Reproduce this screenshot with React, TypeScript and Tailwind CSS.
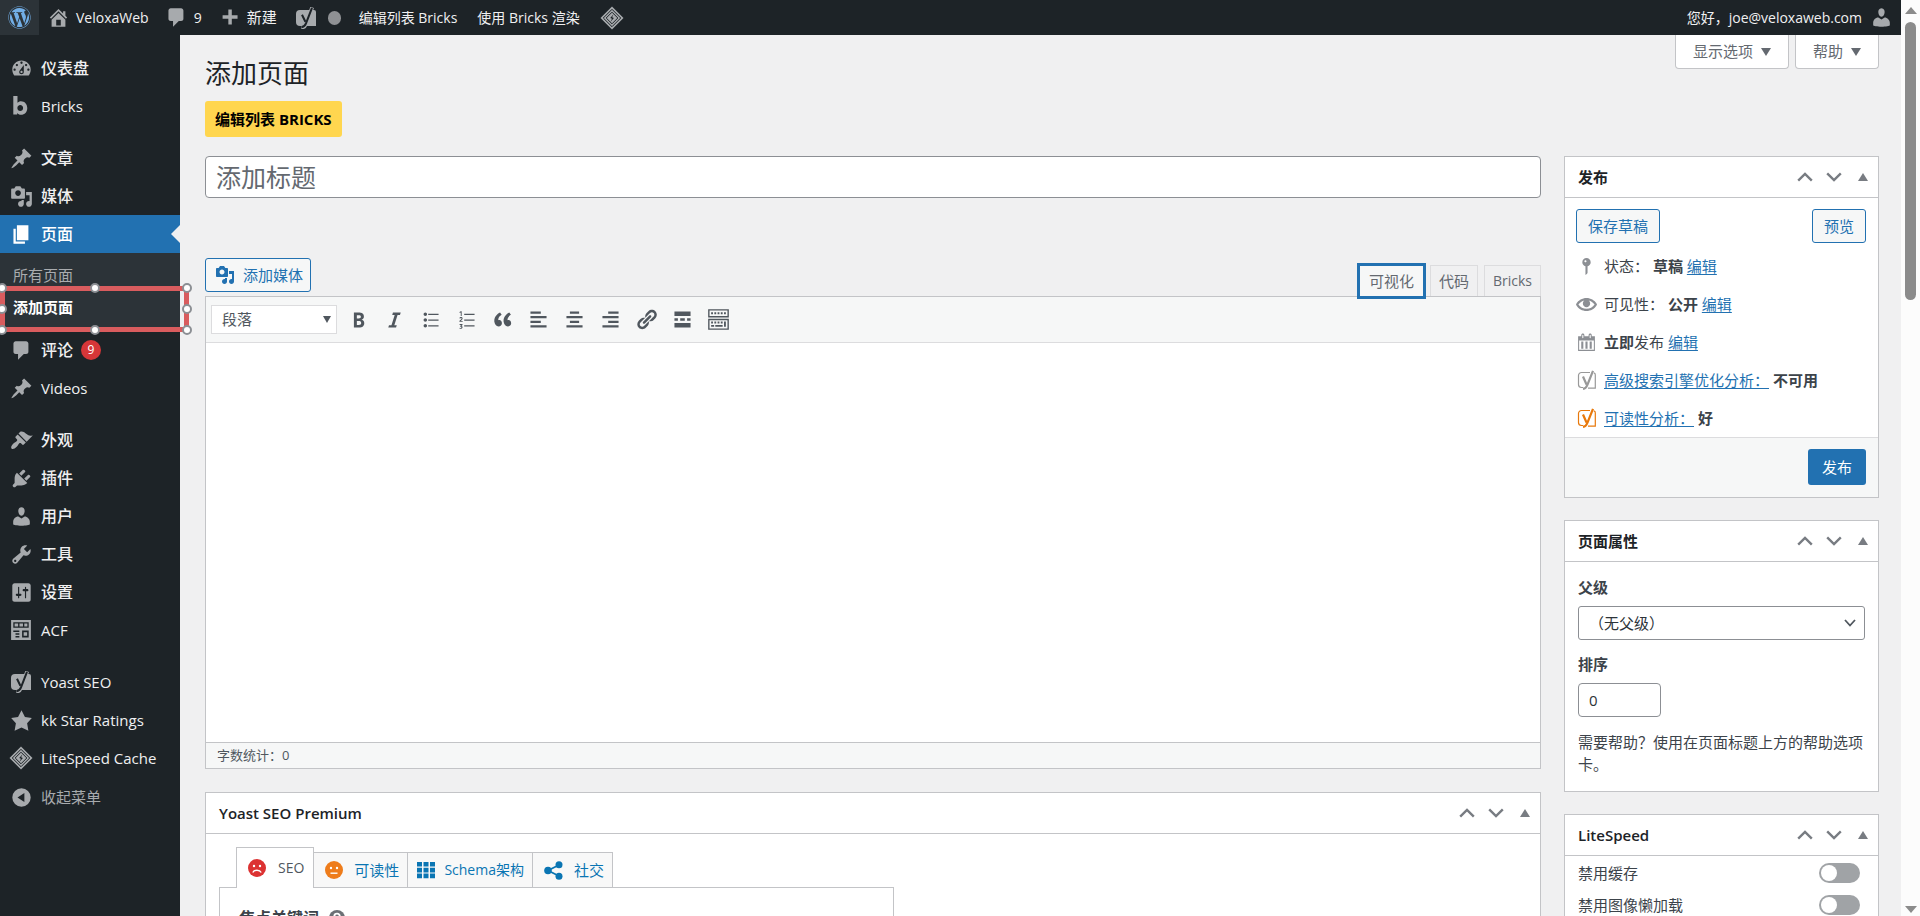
import type { ReactNode } from 'react';
import { FaWordpress } from 'react-icons/fa';

const paths = {
  home: 'M16 8.5l1.53 1.53-1.06 1.06L10 4.6l-6.47 6.49-1.06-1.06L10 2.5l4 4v-2h2v4zm-6-2.46l6 5.99V18H4v-5.97zM12 17v-5H8v5h4z',
  comments: 'M5 2h9c1.1 0 2 .9 2 2v7c0 1.1-.9 2-2 2h-2l-5 5v-5H5c-1.1 0-2-.9-2-2V4c0-1.1.9-2 2-2z',
  plus: 'M17 8v3h-5v5H9v-5H4V8h5V3h3v5h5z',
  pin: 'M10.44 3.02l1.82-1.82 6.36 6.35-1.83 1.82c-1.05-.68-2.48-.57-3.41.36l-.75.75c-.92.93-1.04 2.35-.35 3.41l-1.83 1.82-2.41-2.41-2.8 2.79c-.42.42-3.38 2.71-3.8 2.29s1.86-3.39 2.28-3.81l2.79-2.79L4.1 9.36l1.83-1.82c1.05.69 2.48.57 3.4-.36l.75-.75c.93-.92 1.05-2.35.36-3.41z',
  media: 'M13 11V4c0-.55-.45-1-1-1h-1.67L9 1H5L3.67 3H2c-.55 0-1 .45-1 1v7c0 .55.45 1 1 1h10c.55 0 1-.45 1-1zM7 4.5c1.38 0 2.5 1.12 2.5 2.5S8.38 9.5 7 9.5 4.5 8.38 4.5 7 5.62 4.5 7 4.5zM14 6h5v10.5c0 1.38-1.12 2.5-2.5 2.5S14 17.88 14 16.5s1.12-2.5 2.5-2.5c.17 0 .34.02.5.05V9h-3V6zm-4 8.05V13h2v3.5c0 1.38-1.12 2.5-2.5 2.5S7 17.88 7 16.5 8.12 14 9.5 14c.17 0 .34.02.5.05z',
  page: 'M6 15V2h10v13H6zm-1 1h8v2H3V5h2v11z',
  appearance: 'M14.48 11.06L7.41 3.99l1.5-1.5c.5-.56 2.3-.47 3.51.32 1.21.8 1.43 1.28 2.91 2.1 1.18.64 2.45 1.26 4.45.85zm-.71.71L6.7 4.7 4.93 6.47c-.39.39-.39 1.02 0 1.41l1.06 1.06c.39.39.39 1.03 0 1.42-.6.6-1.43 1.11-2.21 1.69-.35.26-.7.53-1.01.84C1.43 14.23.4 16.08 1.4 17.07c.99 1 2.84-.03 4.18-1.36.31-.31.58-.66.85-1.02.57-.78 1.08-1.61 1.69-2.21.39-.39 1.02-.39 1.41 0l1.06 1.06c.39.39 1.02.39 1.41 0z',
  plugins: 'M13.11 4.36L9.87 7.6 8 5.73l3.24-3.24c.35-.34 1.05-.2 1.56.32.52.51.66 1.21.31 1.55zm-8 1.77l.91-1.12 9.01 9.01-1.19.84c-.71.71-2.63 1.16-3.82 1.16H6.14L4.9 17.26c-.59.59-1.54.59-2.12 0-.59-.58-.59-1.53 0-2.12l1.24-1.24v-3.88c0-1.13.4-3.19 1.09-3.89zm7.26 3.97l3.24-3.24c.34-.35 1.04-.21 1.55.31.52.51.66 1.21.31 1.55l-3.24 3.25z',
  users: 'M10 9.25c-2.27 0-2.73-3.44-2.73-3.44C7 4.02 7.82 2 9.97 2c2.16 0 2.98 2.02 2.71 3.81 0 0-.41 3.44-2.68 3.44zm0 2.57L12.72 10c2.39 0 4.52 2.33 4.52 4.53v2.49s-3.65 1.13-7.24 1.13c-3.65 0-7.24-1.13-7.24-1.13v-2.49c0-2.25 1.94-4.48 4.47-4.48z',
  tools: 'M16.68 9.77c-1.34 1.34-3.3 1.67-4.95.99l-5.41 6.52c-.99.99-2.59.99-3.58 0s-.99-2.59 0-3.57l6.52-5.42c-.68-1.65-.35-3.61.99-4.95 1.28-1.28 3.12-1.62 4.72-1.06l-2.89 2.89 2.82 2.82 2.86-2.87c.53 1.58.18 3.39-1.08 4.65zM3.81 16.21c.4.39 1.04.39 1.43 0 .4-.4.4-1.04 0-1.43-.39-.4-1.03-.4-1.43 0-.39.39-.39 1.03 0 1.43z',
  settings: 'M18 16V4c0-1.1-.9-2-2-2H4c-1.1 0-2 .9-2 2v12c0 1.1.9 2 2 2h12c1.1 0 2-.9 2-2zM8 11h1c.55 0 1 .45 1 1s-.45 1-1 1H8v1.5c0 .28-.22.5-.5.5s-.5-.22-.5-.5V13H6c-.55 0-1-.45-1-1s.45-1 1-1h1V5.5c0-.28.22-.5.5-.5s.5.22.5.5V11zm5-2h-1c-.55 0-1-.45-1-1s.45-1 1-1h1V5.5c0-.28.22-.5.5-.5s.5.22.5.5V7h1c.55 0 1 .45 1 1s-.45 1-1 1h-1v5.5c0 .28-.22.5-.5.5s-.5-.22-.5-.5V9z',
  dashboard: 'M3.76 16h12.48c1.1-1.37 1.76-3.11 1.76-5 0-4.42-3.58-8-8-8s-8 3.58-8 8c0 1.89.66 3.63 1.76 5zM10 4c.55 0 1 .45 1 1s-.45 1-1 1-1-.45-1-1 .45-1 1-1zM6 6c.55 0 1 .45 1 1s-.45 1-1 1-1-.45-1-1 .45-1 1-1zm8 0c.55 0 1 .45 1 1s-.45 1-1 1-1-.45-1-1 .45-1 1-1zm-5.37 5.55L12 7v6c0 1.1-.9 2-2 2s-2-.9-2-2c0-.57.24-1.08.63-1.45zM4 10c.55 0 1 .45 1 1s-.45 1-1 1-1-.45-1-1 .45-1 1-1zm12 0c.55 0 1 .45 1 1s-.45 1-1 1-1-.45-1-1 .45-1 1-1zm-5 3c0-.55-.45-1-1-1s-1 .45-1 1 .45 1 1 1 1-.45 1-1z',
  star: 'M10 1l3 6 6 .75-4.12 4.62L16 19l-6-3-6 3 1.13-6.63L1 7.75 7 7z',
  collapse: 'M10 2a8 8 0 1 0 0 16 8 8 0 0 0 0-16zM12.5 6v8l-6-4z',
  acf: 'M1 1h18v18H1zM3 3v5h14V3zM4.2 4.2h3.2v2.6H4.2zM8.6 4.2h3.2v2.6H8.6zM13 4.2h2.8v2.6H13zM3 10.5v1.3h5.5v-1.3zM5 13v1.3h3.5V13zM5 15.5v1.3h3.5v-1.3zM11 10.5v6.3h6v-6.3zM12.4 12h3.2v3.2h-3.2z',
  bold: 'M6 4v13h4.54c1.37 0 2.46-.33 3.26-1 .8-.66 1.2-1.58 1.2-2.77 0-.84-.17-1.51-.51-2.01s-.9-.85-1.67-1.03v-.09c.57-.1 1.02-.4 1.36-.9s.51-1.13.51-1.91c0-1.14-.39-1.98-1.17-2.5C12.75 4.26 11.5 4 9.78 4H6zm2.57 5.15V6.26h1.36c.73 0 1.27.11 1.61.32.34.22.51.58.51 1.07 0 .54-.16.92-.47 1.15s-.82.35-1.51.35h-1.5zm0 2.19h1.6c1.44 0 2.16.53 2.16 1.61 0 .6-.17 1.05-.51 1.34s-.86.43-1.57.43H8.57v-3.38z',
  italic: 'M14.78 6h-2.13l-2.8 9h2.12l-.62 2H4.6l.62-2h2.14l2.8-9H8.03l.62-2h6.75z',
  ul: 'M5.5 7C4.67 7 4 6.33 4 5.5 4 4.68 4.67 4 5.5 4 6.32 4 7 4.68 7 5.5 7 6.33 6.32 7 5.5 7zM8 5h9v1H8V5zm-2.5 7c-.83 0-1.5-.67-1.5-1.5C4 9.68 4.67 9 5.5 9c.82 0 1.5.68 1.5 1.5 0 .83-.68 1.5-1.5 1.5zM8 10h9v1H8v-1zm-2.5 7c-.83 0-1.5-.67-1.5-1.5 0-.82.67-1.5 1.5-1.5.82 0 1.5.68 1.5 1.5 0 .83-.68 1.5-1.5 1.5zM8 15h9v1H8v-1z',
  ol: 'M8 5h9v1H8zM8 10h9v1H8zM8 15h9v1H8zM4 3.5l1-.7h.8V7H5V3.9l-1 .5zM3.8 9c.2-1.5 2.8-1.5 2.8.1 0 .9-1 1.5-1.5 2.1h1.6v.8H3.8v-.7c.7-.9 1.9-1.6 1.9-2.2 0-.6-1-.5-1.1.1zM4 14h2.5v.8l-.9.9c1.6.3 1.1 2.4-.6 2.4-.5 0-.8-.1-1.1-.2v-.8c.8.4 1.7.2 1.7-.3 0-.4-.6-.5-1.1-.5v-.6l.8-.9H4z',
  quote: 'M9.49 13.22c0-.74-.2-1.38-.61-1.9-.62-.78-1.83-.88-2.53-.72-.29-1.65 1.11-3.75 2.92-4.65L7.88 4c-2.73 1.3-5.42 4.28-4.96 8.05C3.21 14.43 4.59 16 6.54 16c.85 0 1.56-.25 2.12-.75s.83-1.18.83-2.03zm8.05 0c0-.74-.2-1.38-.61-1.9-.63-.78-1.83-.88-2.53-.72-.29-1.65 1.11-3.75 2.92-4.65L15.93 4c-2.73 1.3-5.41 4.28-4.95 8.05.29 2.38 1.66 3.95 3.61 3.95.85 0 1.56-.25 2.12-.75s.83-1.18.83-2.03z',
  alignLeft: 'M12 5V3H3v2h9zm5 4V7H3v2h14zm-5 4v-2H3v2h9zm5 4v-2H3v2h14z',
  alignCenter: 'M14 5V3H6v2h8zm3 4V7H3v2h14zm-3 4v-2H6v2h8zm3 4v-2H3v2h14z',
  alignRight: 'M17 5V3H8v2h9zm0 4V7H3v2h14zm0 4v-2H8v2h9zm0 4v-2H3v2h14z',
  link: 'M17.74 2.76c1.68 1.69 1.68 4.41 0 6.1l-1.53 1.52c-1.12 1.12-2.7 1.47-4.14 1.09l2.62-2.61.76-.77.76-.76c.84-.84.84-2.2 0-3.04-.84-.85-2.2-.85-3.04 0l-.77.76-3.38 3.38c-.37-1.44-.02-3.02 1.1-4.14l1.52-1.53c1.69-1.68 4.42-1.68 6.1 0zM8.59 13.43l5.34-5.34c.42-.42.42-1.1 0-1.52-.44-.43-1.13-.39-1.53 0l-5.33 5.34c-.42.42-.42 1.1 0 1.52.44.43 1.13.39 1.52 0zm-.76 2.29l4.14-4.15c.38 1.44.03 3.02-1.09 4.14l-1.52 1.53c-1.69 1.68-4.41 1.68-6.1 0-1.68-1.68-1.68-4.42 0-6.1l1.53-1.52c1.12-1.12 2.7-1.47 4.14-1.1l-4.14 4.15c-.85.84-.85 2.2 0 3.05.84.84 2.2.84 3.04 0z',
  more: 'M17 7V3H3v4h14zM6 11V9H3v2h3zm6 0V9H8v2h4zm5 0V9h-3v2h3zm0 6v-4H3v4h14z',
  kitchensink: 'M1 1h18v7.200H1zM2.200 2.200v4.800h15.600V2.200zM3.600 3.700h1.600v1.700H3.600zM6.400 3.700H8v1.700H6.400zM9.200 3.700h1.600v1.700H9.200zM12 3.700h1.600v1.700H12zM14.800 3.700h1.600v1.700h-1.600zM1 9.400h18V19H1zM2.200 10.600v7.200h15.600v-7.200zM3.600 11.800h1.600v1.700H3.600zM6.400 11.800H8v1.700H6.400zM9.200 11.800h1.600v1.700H9.200zM12 11.800h1.600v1.700H12zM14.800 11.800h1.600v4.600h-1.600zM3.600 14.800h2.600v1.600H3.600zM7.200 14.800h6.400v1.600H7.200z',
  status: 'M14 6c0 1.86-1.28 3.41-3 3.86V16c0 1-2 2-2 2V9.86c-1.72-.45-3-2-3-3.86 0-2.21 1.79-4 4-4s4 1.79 4 4zM8 5c0 .55.45 1 1 1s1-.45 1-1-.45-1-1-1-1 .45-1 1z',
  eye: 'M19.7 9.4C17.7 6 14 3.9 10 3.9S2.3 6 .3 9.4L0 10l.3.6c2 3.4 5.7 5.5 9.7 5.5s7.7-2.1 9.7-5.5l.3-.6-.3-.6zM10 14.1c-3.1 0-6-1.6-7.7-4.1C3.6 8 5.7 6.6 8 6.1c-.9.6-1.5 1.7-1.5 2.9 0 1.9 1.6 3.5 3.5 3.5s3.5-1.6 3.5-3.5c0-1.2-.6-2.3-1.5-2.9 2.3.5 4.4 1.9 5.7 3.9-1.7 2.5-4.6 4.1-7.7 4.1z',
  calendar: 'M15 4h3v14H2V4h3V3c0-.83.67-1.5 1.5-1.5S8 2.17 8 3v1h4V3c0-.83.67-1.5 1.5-1.5S15 2.17 15 3v1zM6 3v2.5c0 .28.22.5.5.5s.5-.22.5-.5V3c0-.28-.22-.5-.5-.5S6 2.72 6 3zm7 0v2.5c0 .28.22.5.5.5s.5-.22.5-.5V3c0-.28-.22-.5-.5-.5s-.5.22-.5.5zm4 14V8H3v9h14zM7 16V9H5v7h2zm4 0V9H9v7h2zm4 0V9h-2v7h2z',
  grid: 'M1 2h5v4.6H1zM7.5 2h5v4.6h-5zM14 2h5v4.6h-5zM1 7.8h5v4.6H1zM7.5 7.8h5v4.6h-5zM14 7.8h5v4.6h-5zM1 13.6h5v4.6H1zM7.5 13.6h5v4.6h-5zM14 13.6h5v4.6h-5z',
  bricks: 'M3 1h3.800v6c.8-.9 1.900-1.400 3.200-1.400 3.300 0 5.700 2.600 5.700 6.200S13.300 18 10 18c-1.500 0-2.700-.600-3.500-1.600V17.700H3zM9.300 9c-1.500 0-2.600 1.200-2.600 2.800s1.100 2.800 2.600 2.800 2.600-1.200 2.600-2.800S10.800 9 9.300 9z',
};
type IconName = keyof typeof paths;

function Icon({ name, className = 'size-[23px]' }: { name: IconName; className?: string }) {
  return (
    <svg viewBox="0 0 20 20" fill="currentColor" fillRule="evenodd" className={`shrink-0 ${className}`} aria-hidden="true">
      <path d={paths[name]} />
    </svg>
  );
}

function Yoast({ className = 'size-[22px]' }: { className?: string }) {
  return (
    <svg viewBox="0 0 22 22" className={`shrink-0 ${className}`} aria-hidden="true">
      <path d="M5 3h14a2 2 0 0 1 2 2v14H5a4 4 0 0 1-4-4V7a4 4 0 0 1 4-4z" fill="currentColor" />
      <path d="M17.200.4L10.800 17.200c-.9 2.400-1.900 3.300-4.600 3.500" stroke="#a7aaad" strokeWidth="3.800" fill="none" />
      <path d="M17 .8L11 16.300c-.9 2.500-2 3.400-4.600 3.900M7 7.800l3.400 7" stroke="#1d2327" strokeWidth="2" fill="none" />
    </svg>
  );
}

function YoastOutline({ className }: { className: string }) {
  return (
    <svg viewBox="0 0 20 20" className={`size-5 shrink-0 ${className}`} fill="none" stroke="currentColor" aria-hidden="true">
      <path d="M13 2.500H4.500a3 3 0 0 0-3 3v9a3 3 0 0 0 3 3H6M11 18.200h7.300V5a2 2 0 0 0-1.500-2.200" strokeWidth="1.200" />
      <path d="M16 .8L10.300 15c-.8 2.500-1.700 3.600-4.300 3.900M6 6.500l3.500 8" strokeWidth="2.200" />
    </svg>
  );
}

function LiteSpeed({ className = 'size-6' }: { className?: string }) {
  return (
    <svg viewBox="0 0 24 24" className={`shrink-0 ${className}`} aria-hidden="true">
      <path d="M12 .5L23.500 12 12 23.500.5 12z" fill="#a7aaad" />
      <path d="M12 3.300L20.700 12 12 20.700 3.300 12z" fill="none" stroke="#1d2327" strokeWidth="1" />
      <path d="M12 6.200L17.800 12 12 17.800 6.200 12z" fill="none" stroke="#1d2327" strokeWidth="1" />
      <path d="M13.500 8.200l-3.300 3.900 1.800.6-1.600 3.300 3.500-3.900-1.800-.8z" fill="#1d2327" />
    </svg>
  );
}

function Face({ color, sad }: { color: string; sad?: boolean }) {
  return (
    <svg viewBox="0 0 18 18" className="size-[18px]" aria-hidden="true">
      <circle cx="9" cy="9" r="9" fill={color} />
      <circle cx="6" cy="7" r="1.200" fill="#fff" />
      <circle cx="12" cy="7" r="1.200" fill="#fff" />
      <path d={sad ? 'M4.800 13.500c1.500-3 6.900-3 8.400 0' : 'M5.500 12.200h7'} stroke="#fff" strokeWidth="1.400" fill="none" />
    </svg>
  );
}

type MenuEntry = { label: string; icon: ReactNode; latin?: boolean; badge?: string };

function MenuRow({ item, current }: { item: MenuEntry; current?: boolean }) {
  return (
    <a
      href="#"
      className={`relative flex h-[38px] items-center gap-2 pl-[9px] ${item.latin ? 'text-[15px]' : 'text-base font-medium'} ${
        current ? 'bg-[#2271b1] text-white' : 'text-[#f0f0f1]'
      }`}
    >
      <span className={`flex w-6 justify-center ${current ? 'text-white' : 'text-[#a7aaad]'}`}>{item.icon}</span>
      {item.label}
      {item.badge && (
        <span className="flex size-5 items-center justify-center rounded-full bg-[#d63638] text-xs text-white">{item.badge}</span>
      )}
      {current && (
        <svg viewBox="0 0 9 18" className="absolute top-[10px] right-0 h-[18px] w-[9px]" aria-hidden="true">
          <path d="M9 0v18L0 9z" fill="#f0f0f1" />
        </svg>
      )}
    </a>
  );
}

const group1: MenuEntry[] = [
  { label: '仪表盘', icon: <Icon name="dashboard" /> },
  { label: 'Bricks', icon: <Icon name="bricks" className="size-[22px]" />, latin: true },
];
const group2: MenuEntry[] = [
  { label: '文章', icon: <Icon name="pin" /> },
  { label: '媒体', icon: <Icon name="media" /> },
];
const group3: MenuEntry[] = [
  { label: '评论', icon: <Icon name="comments" />, badge: '9' },
  { label: 'Videos', icon: <Icon name="pin" />, latin: true },
];
const group4: MenuEntry[] = [
  { label: '外观', icon: <Icon name="appearance" /> },
  { label: '插件', icon: <Icon name="plugins" /> },
  { label: '用户', icon: <Icon name="users" /> },
  { label: '工具', icon: <Icon name="tools" /> },
  { label: '设置', icon: <Icon name="settings" /> },
  { label: 'ACF', icon: <Icon name="acf" className="size-[22px]" />, latin: true },
];
const group5: MenuEntry[] = [
  { label: 'Yoast SEO', icon: <Yoast />, latin: true },
  { label: 'kk Star Ratings', icon: <Icon name="star" />, latin: true },
  { label: 'LiteSpeed Cache', icon: <LiteSpeed />, latin: true },
];

function Group({ items }: { items: MenuEntry[] }) {
  return (
    <div>
      {items.map((item) => (
        <MenuRow key={item.label} item={item} />
      ))}
    </div>
  );
}

const handle = 'absolute size-[10px] -translate-x-1/2 -translate-y-1/2 rounded-full border-2 border-[#8c8f94] bg-white';

/* Highlight frame with drag handles over the current submenu entry. */
function Selection() {
  return (
    <div className="pointer-events-none absolute top-[3px] left-0 z-20 h-[46px] w-[189px] border-[5px] border-[#d95c5e]">
      <div className="absolute -inset-[3px]">
        <span className={`${handle} top-0 left-0`} />
        <span className={`${handle} top-0 left-1/2`} />
        <span className={`${handle} top-0 left-full`} />
        <span className={`${handle} top-1/2 left-0`} />
        <span className={`${handle} top-1/2 left-full`} />
        <span className={`${handle} top-full left-0`} />
        <span className={`${handle} top-full left-1/2`} />
        <span className={`${handle} top-full left-full`} />
      </div>
    </div>
  );
}

function Sidebar() {
  return (
    <nav className="relative z-10 flex w-[180px] shrink-0 flex-col gap-[14px] bg-[#1d2327] pt-[14px]">
      <Group items={group1} />
      <div>
        <Group items={group2} />
        <MenuRow item={{ label: '页面', icon: <Icon name="page" /> }} current />
        <div className="flex h-[78px] flex-col bg-[#2c3338] pt-[6px] text-[15px]">
          <a href="#" className="flex h-8 items-center pl-[13px] text-[#a9acaf]">所有页面</a>
          <div className="relative -mt-2 pt-2">
            <a href="#" className="flex h-8 items-center pl-[13px] font-bold text-white">添加页面</a>
            <Selection />
          </div>
        </div>
        <Group items={group3} />
      </div>
      <Group items={group4} />
      <div>
        <Group items={group5} />
        <button type="button" className="flex h-10 items-center gap-2 pl-[9px] text-[15px] text-[#a7aaad]">
          <span className="flex w-6 justify-center">
            <Icon name="collapse" />
          </span>
          收起菜单
        </button>
      </div>
    </nav>
  );
}

function AdminBar() {
  return (
    <header className="flex h-[35px] shrink-0 items-center justify-between bg-[#1d2327] text-sm text-[#f0f0f1]">
      <div className="flex h-full items-center">
        <a href="#" aria-label="WordPress" className="flex h-full w-[39px] items-center justify-center bg-[#2c3338]">
          <FaWordpress className="size-[23px] text-[#72aee6]" />
        </a>
        <a href="#" className="ml-2 flex items-center gap-[6px]">
          <Icon name="home" className="size-[23px] text-[#a7aaad]" />
          VeloxaWeb
        </a>
        <a href="#" className="ml-4 flex items-center gap-[6px]">
          <Icon name="comments" className="size-[23px] text-[#a7aaad]" />
          9
        </a>
        <a href="#" className="ml-4 flex items-center gap-[6px] text-[15px]">
          <Icon name="plus" className="size-[23px] text-[#a7aaad]" />
          新建
        </a>
        <a href="#" aria-label="Yoast SEO" className="ml-[18px] flex items-center gap-[11px] text-[#a7aaad]">
          <Yoast />
          <span className="h-[14px] w-[13px] rounded-full bg-[#8f9194]" />
        </a>
        <a href="#" className="ml-[18px]">编辑列表 Bricks</a>
        <a href="#" className="ml-5">使用 Bricks 渲染</a>
        <a href="#" aria-label="LiteSpeed" className="ml-5">
          <LiteSpeed />
        </a>
      </div>
      <a href="#" className="mr-2 flex items-center gap-2">
        您好，joe@veloxaweb.com
        <Icon name="users" className="size-[23px] text-[#a7aaad]" />
      </a>
    </header>
  );
}

function BoxHeader({ title, latin }: { title: string; latin?: boolean }) {
  return (
    <div className="flex h-[41px] items-center justify-between border-b border-[#c3c4c7] pr-[10px] pl-[13px]">
      <h2 className={`text-[15px] text-[#1d2327] ${latin ? 'font-semibold' : 'font-bold'}`}>{title}</h2>
      <div className="flex items-center gap-[13px] text-[#787c82]">
        <button type="button" aria-label="上移">
          <svg viewBox="0 0 16 10" className="h-[10px] w-4" fill="none" stroke="currentColor" strokeWidth="2.400"><path d="M1.200 8.700L8 2l6.800 6.700" /></svg>
        </button>
        <button type="button" aria-label="下移">
          <svg viewBox="0 0 16 10" className="h-[10px] w-4" fill="none" stroke="currentColor" strokeWidth="2.400"><path d="M1.200 1.300L8 8l6.800-6.700" /></svg>
        </button>
        <button type="button" aria-label="切换面板" className="ml-[3px]">
          <svg viewBox="0 0 10 8" className="h-2 w-[10px]" fill="currentColor"><path d="M5 0l5 8H0z" /></svg>
        </button>
      </div>
    </div>
  );
}

const box = 'border border-[#c3c4c7] bg-white';
const outlineButton = 'flex h-[34px] items-center rounded-[3px] border border-[#2271b1] bg-[#f6f7f7] px-[11px] text-[15px] text-[#2271b1]';
const link = 'text-[#2271b1] underline underline-offset-2';

function PublishBox() {
  return (
    <section className={box}>
      <BoxHeader title="发布" />
      <div className="flex justify-between pt-[11px] pr-3 pl-[11px]">
        <button type="button" className={outlineButton}>保存草稿</button>
        <button type="button" className={outlineButton}>预览</button>
      </div>
      <ul className="flex flex-col pt-1 text-[15px] text-[#3c434a]">
        {[
          { id: 'status', icon: <Icon name="status" className="size-[21px]" />, body: <>状态： <b>草稿</b> <a href="#" className={link}>编辑</a></> },
          { id: 'visibility', icon: <Icon name="eye" className="size-[21px]" />, body: <>可见性： <b>公开</b> <a href="#" className={link}>编辑</a></> },
          { id: 'date', icon: <Icon name="calendar" className="size-[21px]" />, body: <><b>立即</b>发布 <a href="#" className={link}>编辑</a></> },
          { id: 'seo', icon: <YoastOutline className="text-[#999]" />, body: <><a href="#" className={link}>高级搜索引擎优化分析：</a> <b>不可用</b></> },
          { id: 'read', icon: <YoastOutline className="text-[#e8790c]" />, body: <><a href="#" className={link}>可读性分析：</a> <b>好</b></> },
        ].map((row) => (
          <li key={row.id} className="flex h-[38px] items-center gap-[7px] pl-[11px]">
            <span className="flex w-[21px] justify-center text-[#8c8f94]">{row.icon}</span>
            <span>{row.body}</span>
          </li>
        ))}
      </ul>
      <div className="flex justify-end border-t border-[#dcdcde] bg-[#f6f7f7] px-3 pt-[11px] pb-3">
        <button type="button" className="h-9 rounded-[3px] bg-[#2271b1] px-[14px] text-[15px] text-white">发布</button>
      </div>
    </section>
  );
}

function AttributesBox() {
  return (
    <section className={box}>
      <BoxHeader title="页面属性" />
      <div className="px-[13px] pt-[14px] pb-4 text-[15px] leading-[22px] text-[#3c434a]">
        <label htmlFor="parent" className="block font-bold">父级</label>
        <div className="relative mt-2">
          <select id="parent" className="h-[34px] w-full appearance-none rounded-[3px] border border-[#8c8f94] bg-white px-[10px] text-[15px] text-[#2c3338]">
            <option>（无父级）</option>
          </select>
          <svg viewBox="0 0 12 8" className="pointer-events-none absolute top-[13px] right-[9px] h-2 w-3" fill="none" stroke="#50575e" strokeWidth="1.800"><path d="M1 1l5 5.500L11 1" /></svg>
        </div>
        <label htmlFor="order" className="mt-[13px] block font-bold">排序</label>
        <input id="order" type="text" defaultValue="0" className="mt-2 block h-[34px] w-[83px] rounded-[4px] border border-[#8c8f94] bg-white px-[10px] text-[15px] text-[#2c3338]" />
        <p className="mt-[14px]">需要帮助？使用在页面标题上方的帮助选项卡。</p>
      </div>
    </section>
  );
}

function LiteSpeedBox() {
  return (
    <section className={box}>
      <BoxHeader title="LiteSpeed" latin />
      <div className="pt-px pr-[18px] pl-[13px] text-[15px] text-[#3c434a]">
        {['禁用缓存', '禁用图像懒加载'].map((label) => (
          <label key={label} className="flex h-8 items-center justify-between">
            {label}
            <input
              type="checkbox"
              className="relative h-5 w-[41px] appearance-none rounded-full bg-[#a0a3a6] before:absolute before:top-[2px] before:left-[2px] before:size-4 before:rounded-full before:bg-white"
            />
          </label>
        ))}
      </div>
    </section>
  );
}

const tools: { name: IconName; label: string }[] = [
  { name: 'bold', label: '粗体' },
  { name: 'italic', label: '斜体' },
  { name: 'ul', label: '项目符号列表' },
  { name: 'ol', label: '编号列表' },
  { name: 'quote', label: '段落引用' },
  { name: 'alignLeft', label: '左对齐' },
  { name: 'alignCenter', label: '居中对齐' },
  { name: 'alignRight', label: '右对齐' },
  { name: 'link', label: '插入链接' },
  { name: 'more', label: '插入More标签' },
  { name: 'kitchensink', label: '工具栏开关' },
];

function Editor() {
  const tab = 'flex h-[31px] items-center border border-b-0 border-[#dcdcde] bg-[#f0f0f1] text-[#646970]';
  return (
    <div className="mt-[60px]">
      <div className="flex items-start justify-between">
        <button type="button" className="flex h-[34px] items-center gap-2 rounded-[3px] border border-[#2271b1] bg-[#f6f7f7] pr-[7px] pl-[9px] text-[15px] text-[#2271b1]">
          <Icon name="media" className="size-5" />
          添加媒体
        </button>
        <div className="relative z-10 mt-[7px] -mb-[7px] flex items-start">
          <button type="button" className="-mt-[2px] mr-1 flex h-9 w-[69px] items-center justify-center border-[3px] border-[#2271b1] bg-[#f6f7f7] text-[15px] text-[#646970]">可视化</button>
          <button type="button" className={`${tab} mr-[6px] px-2 text-[15px]`}>代码</button>
          <button type="button" className={`${tab} px-2 text-sm`}>Bricks</button>
        </div>
      </div>
      <div className={`${box} mt-1`}>
        <div className="flex h-[46px] items-center border-b border-[#dcdcde] bg-[#f6f7f7] pb-px pl-[5px]">
          <div className="relative">
            <select aria-label="段落格式" className="block h-[29px] w-[126px] appearance-none border border-[#dcdcde] bg-white px-[10px] text-[15px] text-[#50575e]">
              <option>段落</option>
            </select>
            <svg viewBox="0 0 8 7" className="pointer-events-none absolute top-[11px] right-[6px] h-[7px] w-2" fill="#50575e"><path d="M0 0h8L4 7z" /></svg>
          </div>
          <div className="ml-[3px] flex">
            {tools.map((tool) => (
              <button key={tool.name} type="button" aria-label={tool.label} className="flex size-9 items-center justify-center text-[#50575e]">
                <Icon name={tool.name} />
              </button>
            ))}
          </div>
        </div>
        <textarea aria-label="内容" className="block h-[399px] w-full resize-none bg-white p-3" />
        <div className="flex h-[26px] items-center border-t border-[#c3c4c7] bg-[#f6f7f7] pl-[11px] text-[13px] text-[#50575e]">字数统计：0</div>
      </div>
    </div>
  );
}

function YoastBox() {
  const tab = 'mb-px flex h-[35px] items-center border-t border-r border-[#c3c4c7] bg-[#f8f8f8] text-[15px] text-[#0a75b3]';
  return (
    <section className={`${box} mt-[23px]`}>
      <BoxHeader title="Yoast SEO Premium" latin />
      <div className="px-[13px] pt-[13px]">
        <div className="relative z-10 -mb-px flex items-end pl-[17px]">
          <button type="button" className="flex h-[41px] items-center gap-3 border border-b-0 border-[#c3c4c7] bg-white pr-[9px] pl-[11px] text-sm text-[#50575e]">
            <Face color="#dc3232" sad />
            SEO
          </button>
          <button type="button" className={`${tab} gap-[11px] pr-2 pl-[11px]`}>
            <Face color="#ee7c1b" />
            可读性
          </button>
          <button type="button" className={`${tab} gap-2 px-2`}>
            <Icon name="grid" className="size-5" />
            <span className="text-sm">Schema架构</span>
          </button>
          <button type="button" className={`${tab} gap-[11px] pr-2 pl-[11px]`}>
            <svg viewBox="0 0 19 19" className="size-[19px]" fill="currentColor" aria-hidden="true">
              <path d="M15 4L4 9.500 15 15" fill="none" stroke="currentColor" strokeWidth="1.800" />
              <circle cx="15" cy="3.800" r="3.500" />
              <circle cx="4" cy="9.500" r="3.800" />
              <circle cx="15" cy="15.200" r="3.500" />
            </svg>
            社交
          </button>
        </div>
        <div className="h-[100px] max-w-[675px] border border-[#c3c4c7] px-[19px] pt-[18px]">
          <div className="flex items-center gap-[10px] text-base font-bold text-[#3c434a]">
            焦点关键词
            <svg viewBox="0 0 16 16" className="size-4" aria-hidden="true">
              <circle cx="8" cy="8" r="8" fill="#6c7075" />
              <path d="M5.300 6.200c.3-3.600 5.700-3.200 5.400.1-.1 1.700-2.700 1.700-2.700 3.600M8 11v2" stroke="#fff" strokeWidth="1.900" fill="none" />
            </svg>
          </div>
        </div>
      </div>
    </section>
  );
}

function ScrollTrack() {
  return (
    <div className="flex w-[19px] shrink-0 flex-col items-center justify-between bg-[#fcfcfc] pt-[7px] pb-[3px]" aria-hidden="true">
      <div className="flex flex-col items-center gap-2">
        <svg viewBox="0 0 12 7" className="h-[7px] w-3" fill="#8b8b8b"><path d="M6 0l6 7H0z" /></svg>
        <span className="h-[278px] w-[11px] rounded-full bg-[#8b8b8b]" />
      </div>
      <svg viewBox="0 0 12 7" className="h-[7px] w-3" fill="#8b8b8b"><path d="M6 7l6-7H0z" /></svg>
    </div>
  );
}

export default function App() {
  const metaTab = 'flex h-[34px] items-center gap-2 rounded-b-[4px] border border-t-0 border-[#c3c4c7] bg-white px-[17px] text-[15px] text-[#646970]';
  return (
    <div className="flex h-screen overflow-hidden bg-[#f0f0f1] font-['Open_Sans','Noto_Sans_CJK_SC',sans-serif]" lang="zh-CN">
      <div className="flex min-w-0 flex-1 flex-col">
        <AdminBar />
        <div className="flex min-h-0 flex-1">
          <Sidebar />
          <main className="min-w-0 flex-1 overflow-hidden pr-[22px] pl-[25px]">
            <div className="flex items-start justify-between">
              <div className="pt-5">
                <h1 className="text-[26px] leading-9 text-[#1d2327]">添加页面</h1>
                <a href="#" className="mt-[10px] flex h-9 items-center rounded-[3px] bg-[#ffd64f] px-[10px] text-[15px] font-bold text-black">编辑列表 BRICKS</a>
              </div>
              <div className="flex gap-[6px]">
                <button type="button" className={metaTab}>
                  显示选项
                  <svg viewBox="0 0 10 8" className="h-2 w-[10px]" fill="#646970"><path d="M0 0h10L5 8z" /></svg>
                </button>
                <button type="button" className={metaTab}>
                  帮助
                  <svg viewBox="0 0 10 8" className="h-2 w-[10px]" fill="#646970"><path d="M0 0h10L5 8z" /></svg>
                </button>
              </div>
            </div>
            <div className="mt-[19px] flex items-start gap-[23px]">
              <div className="min-w-0 flex-1">
                <input
                  type="text"
                  aria-label="添加标题"
                  placeholder="添加标题"
                  className="block h-[42px] w-full rounded-[4px] border border-[#8c8f94] bg-white px-[10px] text-[25px] placeholder:text-[#646970]"
                />
                <Editor />
                <YoastBox />
              </div>
              <aside className="flex w-[315px] shrink-0 flex-col gap-[22px]">
                <PublishBox />
                <AttributesBox />
                <LiteSpeedBox />
              </aside>
            </div>
          </main>
        </div>
      </div>
      <ScrollTrack />
    </div>
  );
}
